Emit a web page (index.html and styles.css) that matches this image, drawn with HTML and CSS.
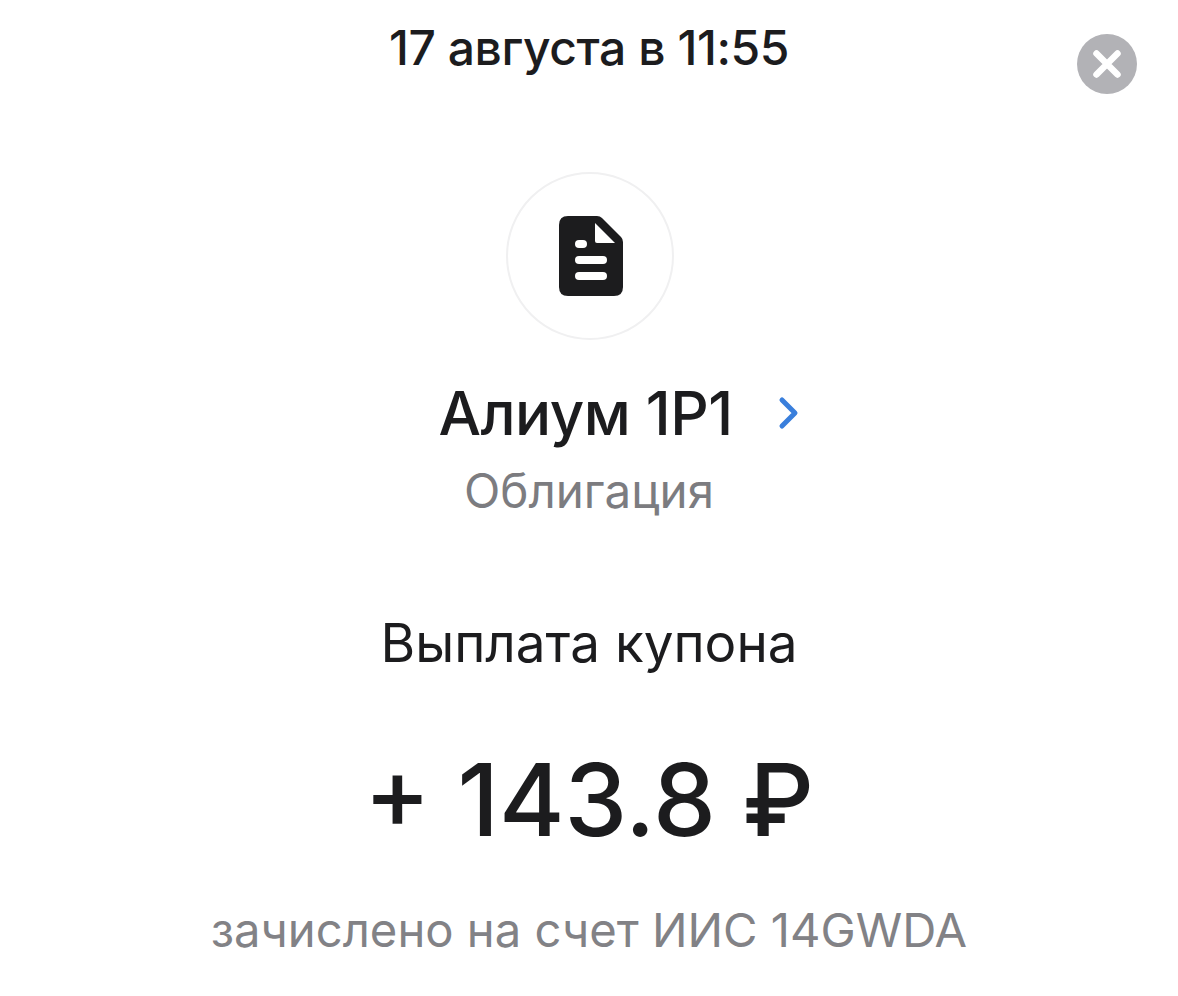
FILE: index.html
```html
<!DOCTYPE html>
<html lang="ru">
<head>
<meta charset="utf-8">
<title>Выплата купона</title>
<link rel="stylesheet" href="styles.css">
</head>
<body>
<main class="screen">
  <header class="top">
    <div class="date">17 августа в 11:55</div>
    <button class="close" aria-label="Закрыть">
      <svg viewBox="0 0 60 60" width="60" height="60"><path d="M19.5 19.5 L40.5 40.5 M40.5 19.5 L19.5 40.5" stroke="#fff" stroke-width="6.5" stroke-linecap="round" fill="none"/></svg>
    </button>
  </header>
  <div class="logo">
    <svg class="doc" viewBox="0 0 64 80" width="64" height="80">
      <path d="M9 0 H38 Q41 0 43 2 L62 21 Q64 23 64 26 V71 Q64 80 55 80 H9 Q0 80 0 71 V9 Q0 0 9 0 Z" fill="#1c1c1e"/>
      <path d="M36 7 L56 27 H38 Q36 27 36 25 Z" fill="#fff"/>
      <rect x="16" y="24" width="12" height="8" rx="4" fill="#fff"/>
      <rect x="16" y="40" width="32" height="8" rx="4" fill="#fff"/>
      <rect x="16" y="56" width="32" height="8" rx="4" fill="#fff"/>
    </svg>
  </div>
  <div class="name-row">
    <span class="name">Алиум 1Р1</span>
    <svg class="chev" viewBox="0 0 22 34" width="22" height="34"><path d="M4 4 L17 17 L4 30" stroke="#3a7fdc" stroke-width="5" stroke-linecap="round" stroke-linejoin="round" fill="none"/></svg>
  </div>
  <div class="kind">Облигация</div>
  <div class="op">Выплата купона</div>
  <div class="amount">+ 143.8 ₽</div>
  <div class="note">зачислено на счет ИИС 14GWDA</div>
</main>
</body>
</html>
```
FILE: styles.css
```css
* { box-sizing: border-box; }
html, body { margin: 0; padding: 0; background: #fff; }
body { font-family: "Inter", "Liberation Sans", sans-serif; color: #1c1c1e; overflow: hidden; }
.screen { width: 1178px; height: 996px; display: flex; flex-direction: column; align-items: center; padding-top: 14px; }
.top { width: 100%; position: relative; display: flex; justify-content: center; }
.date { font-size: 48px; line-height: 66px; letter-spacing: -0.42px; font-weight: 450; padding-top: 1px; }
.close { position: absolute; right: 41px; top: 20px; width: 60px; height: 60px; padding: 0; border: 0; border-radius: 50%; background: #b2b2b6; }
.close svg { display: block; }
.logo { width: 168px; height: 168px; margin-top: 91px; margin-left: 2px; border: 2px solid #f0f0f1; border-radius: 50%; display: flex; align-items: center; justify-content: center; }
.doc { margin-left: 2px; }
.name-row { display: flex; align-items: center; gap: 45px; margin-top: 35px; margin-left: 60px; }
.name { font-size: 60px; line-height: 76px; font-weight: 500; letter-spacing: -0.5px; }
.kind { font-size: 47.5px; line-height: 60px; color: #7c7c80; margin-top: 10px; }
.op { font-size: 53px; line-height: 66px; margin-top: 89px; }
.amount { font-size: 100px; line-height: 120px; font-weight: 550; margin-top: 64px; }
.note { font-size: 47.2px; line-height: 60px; color: #828286; margin-top: 40px; }
```
